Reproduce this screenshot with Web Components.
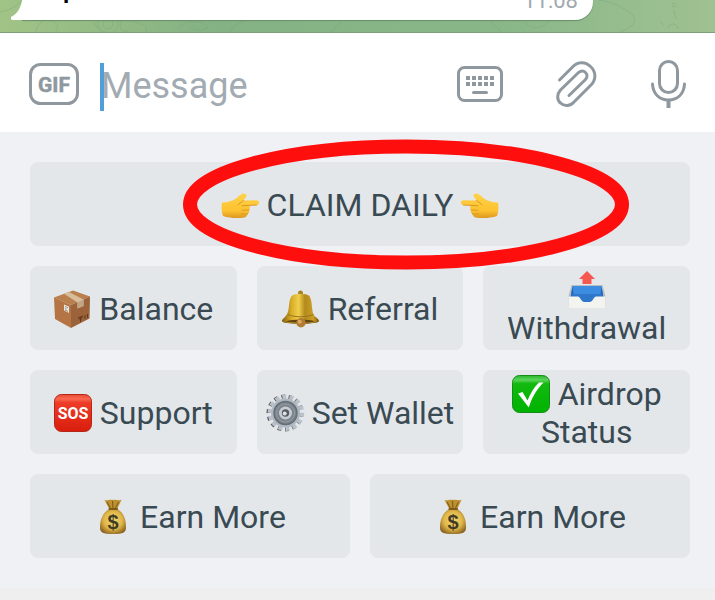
<!DOCTYPE html>
<html lang="en">
<head>
<meta charset="utf-8">
<meta name="viewport" content="width=device-width, initial-scale=1">
<title>Chat</title>
<style>
  body {
    margin: 0;
    background: #efefef;
    font-family: Roboto, "Noto Sans", sans-serif;
  }
</style>
</head>
<body>
<chat-screen></chat-screen>

<script>
// chat-emoji.js

const HAND = `
  <defs>
    <linearGradient id="skin" x1="0" y1="0" x2="0" y2="1">
      <stop offset="0" stop-color="#ffd24a"/>
      <stop offset=".7" stop-color="#fdc22f"/>
      <stop offset="1" stop-color="#dd9720"/>
    </linearGradient>
  </defs>
  <path fill="url(#skin)" d="M1 16.500 C4 17 9 15.500 12.500 14 C15.500 12.500 18 9.500 21 8 C24 6.500 26.500 9 25 11 L22.500 14.500 L35.500 14.300 C39 14.300 39 19 35.500 19 L28 19.500 C29.500 21 29 23 28 24 C28.500 26 27.800 27.500 26.500 28 C26 30.500 24.500 31.500 22 31.800 C16 32.500 7 32 2 30 C.5 27 .3 20 1 16.500Z"/>
  <path fill="none" stroke="#d99a22" stroke-width="1" stroke-linecap="round" d="M22.500 14.600 C20 17 18 17 17 19 M35.500 19 L21 19.800 M28 24 L21 24.200 M26.500 28 L20.500 28"/>`;

const EMOJI = {
  'hand-right': HAND,
  'hand-left': `<g transform="translate(38 0) scale(-1 1)">${HAND}</g>`,
  box: `
    <path fill="#b97f4c" d="M1 7.500 L20 .5 L37 6.500 L18 15Z"/>
    <path fill="#b57443" d="M1 7.500 L18 15 V38 L2 29Z"/>
    <path fill="#9c6239" d="M18 15 L37 6.500 L36.500 28.500 L18 38Z"/>
    <path fill="#d8bd9d" d="M11 3.800 L16 2 L30.500 9.500 V16 L24.500 18.500 V12.500Z"/>
    <path fill="#c2a586" d="M24.500 12.500 L30.500 9.500 V16 L24.500 18.500Z"/>
    <path fill="#e8e5df" d="M11 14.500 L16 16.500 V23 L11 20.500Z"/>
    <path fill="none" stroke="#85817a" stroke-width=".8" d="M12 16.500 L15 17.700 M12 18.500 L13.500 19.200 M12 20 L15 21.300"/>
    <path fill="none" stroke="#643a1e" stroke-width="1" d="M25 28 L30 26 M27.500 27 V32 M25.500 28 L27.500 30 L29.500 26 M32 25 V29 M34.500 24 V28"/>`,
  bell: `
    <defs>
      <linearGradient id="brass" x1="0" x2="1">
        <stop offset="0" stop-color="#80600f"/>
        <stop offset=".25" stop-color="#d8ab25"/>
        <stop offset=".45" stop-color="#f0cf4c"/>
        <stop offset=".62" stop-color="#b38a1c"/>
        <stop offset=".85" stop-color="#caa025"/>
        <stop offset="1" stop-color="#795610"/>
      </linearGradient>
    </defs>
    <circle cx="18.500" cy="3" r="2.500" fill="#a5801e"/>
    <ellipse cx="18.500" cy="31" rx="18.500" ry="3" fill="#765414"/>
    <path fill="url(#brass)" d="M9.500 6 C13 3 24 3 27.500 6 C31 12 29 22 32.500 26 C34.500 28 37 29 37 31 C31 34.500 6 34.500 0 31 C0 29 2.500 28 4.500 25 C8 20 6 11.500 9.500 6Z"/>
    <path fill="none" stroke="#9b741a" stroke-width="1" d="M6 24.500 C12 27.500 25 27.500 31.500 24.500"/>
    <path fill="#634410" d="M4 31.200 C11 29.300 26 29.300 33 31.200 C28 33.200 9 33.200 4 31.200Z"/>
    <circle cx="19" cy="32.800" r="4.700" fill="#b17c32"/>
    <circle cx="17.700" cy="31.800" r="2" fill="#daab60"/>`,
  outbox: `
    <path fill="#f65850" d="M19 0 L27 8 H23.500 V13 H14.500 V8 H11Z"/>
    <path fill="#b7bfc5" d="M3.500 14 H34.500 L37.500 25 V36 H.5 V25Z"/>
    <path fill="#3c8ce1" d="M4.500 15 H33.500 L35.500 27 L20 33 L2.500 27Z"/>
    <path fill="#2166b7" d="M4.500 15 L5.500 23 L2.500 27Z M33.500 15 L32.500 23 L35.500 27Z"/>
    <path fill="#2e77cb" d="M5.500 23 H32.500 L35.500 27 L20 33 L2.500 27Z"/>
    <path fill="#f3f3ef" d="M.5 25.500 H10 C12 25.500 13 30.500 16 31 H22 C25 30.500 26 25.500 28 25.500 H37.500 V36 Q37.500 37 36.500 37 H1.500 Q.5 37 .5 36Z"/>`,
  sos: `
    <defs>
      <linearGradient id="red" x1="0" y1="0" x2="0" y2="1">
        <stop offset="0" stop-color="#e84b34"/>
        <stop offset=".12" stop-color="#fa6950"/>
        <stop offset=".22" stop-color="#ed3c27"/>
        <stop offset="1" stop-color="#d91d0c"/>
      </linearGradient>
    </defs>
    <rect x=".5" y=".5" width="37" height="37" rx="7" fill="url(#red)" stroke="#b52616"/>
    <text x="19" y="25" text-anchor="middle" fill="#fff" font-family="Roboto, sans-serif" font-weight="700" font-size="16">SOS</text>`,
  gear: `
    <circle cx="19" cy="19" r="16.500" fill="none" stroke="#685f5c" stroke-width="4" pathLength="28" stroke-dasharray="1 1"/>
    <circle cx="20" cy="18.800" r="16" fill="none" stroke="#b9c2cc" stroke-width="4.500" pathLength="28" stroke-dasharray="1.100 .9"/>
    <circle cx="19.500" cy="19" r="14.500" fill="#b0b8c1"/>
    <circle cx="19.500" cy="19" r="11.500" fill="#7b848d" stroke="#666e76" stroke-width="1.500"/>
    <circle cx="19.500" cy="19" r="9" fill="none" stroke="#949ca4" stroke-width="1"/>
    <circle cx="19.500" cy="19" r="6.500" fill="#c8cdd4"/>
    <circle cx="19.500" cy="19" r="3.700" fill="#555b64"/>
    <circle cx="18.700" cy="19.500" r="2" fill="#dde0e4"/>`,
  check: `
    <defs>
      <linearGradient id="green" x1="0" y1="0" x2="0" y2="1">
        <stop offset="0" stop-color="#28b62c"/>
        <stop offset=".12" stop-color="#5bd45a"/>
        <stop offset=".22" stop-color="#13b90f"/>
        <stop offset="1" stop-color="#00b300"/>
      </linearGradient>
    </defs>
    <rect x=".5" y=".5" width="37" height="37" rx="7" fill="url(#green)" stroke="#158c18"/>
    <path fill="#fff" d="M6 18.500 L10.500 17 L15.500 25.500 C18.500 18 22 12 27 7.500 H31.500 C25 14 20 22 16.800 32.500Z"/>`,
  bag: `
    <defs>
      <radialGradient id="sack" cx=".5" cy=".45" r=".6">
        <stop offset="0" stop-color="#f6da70"/>
        <stop offset=".6" stop-color="#dfb548"/>
        <stop offset="1" stop-color="#8a6420"/>
      </radialGradient>
    </defs>
    <path fill="#bd912f" d="M10.500 2 C14 3 16 .800 19 2 C22 .800 24 3 27.500 1.800 L23 11.500 H15.500Z"/>
    <path fill="none" stroke="#7b5817" stroke-width="1" d="M13 4 L17 11 M18.500 3 L19 11 M24.500 4 L21 11"/>
    <path fill="url(#sack)" d="M15 11 H23.500 C30 15 32 22 32 29 C32 35 29 36 19 36 C9 36 6 35 6 29 C6 22 8.500 15 15 11Z"/>
    <path stroke="#805a19" stroke-width="2" stroke-linecap="round" d="M15.500 11 H23"/>
    <text x="19" y="31" text-anchor="middle" fill="#413b24" font-family="Liberation Sans, sans-serif" font-weight="700" font-size="20">$</text>`
};

class ChatEmoji extends HTMLElement {
  constructor() {
    super();
    this.attachShadow({ mode: 'open' });
  }

  connectedCallback() {
    this.shadowRoot.innerHTML = `
      <style>
        :host {
          display: inline-block;
          width: 38px;
          height: 38px;
          margin: -2px 0;
          vertical-align: -6px;
        }
        svg {
          display: block;
          overflow: visible;
        }
      </style>
      <svg width="38" height="38" viewBox="0 0 38 38" aria-hidden="true">${EMOJI[this.getAttribute('name')]}</svg>
    `;
  }
}

customElements.define('chat-emoji', ChatEmoji);

// chat-history.js

class ChatHistory extends HTMLElement {
  constructor() {
    super();
    this.attachShadow({ mode: 'open' });
    this.shadowRoot.innerHTML = `
      <style>
        :host {
          display: flex;
          align-items: flex-end;
          position: relative;
          box-sizing: border-box;
          height: 33px;
          padding: 0 122px 12px 11px;
          overflow: hidden;
          background: linear-gradient(90deg, #a1c386 0%, #84b284 30%, #89b788 70%, #a0c192 100%);
          border-bottom: 1px solid #7da17b;
        }
        .pattern {
          position: absolute;
          inset: 0;
          width: 100%;
          height: 100%;
          fill: none;
          stroke: #76a277;
          opacity: .35;
        }
        .tail {
          position: relative;
          z-index: 1;
          flex: none;
          margin-right: -1px;
          fill: #fff;
        }
        .bubble {
          position: relative;
          flex: 1;
          display: flex;
          justify-content: space-between;
          align-items: flex-end;
          box-sizing: border-box;
          height: 64px;
          padding: 0 15px 6px 40px;
          background: #fff;
          border-radius: 0 18px 18px 0;
          box-shadow: 0 1px 1px #668f68;
        }
        p {
          margin: 0 0 10px;
          font-size: 36px;
          line-height: 42px;
          color: #000;
        }
        time {
          font-size: 22px;
          line-height: 26px;
          color: #a1a9af;
        }
      </style>
      <svg class="pattern" aria-hidden="true">
        <path d="M0 12 Q14 10 22 0 M36 32 Q38 20 48 20 Q62 22 56 32 M94 22 Q98 32 106 32 M122 21 Q116 30 128 32 M130 21 Q150 24 146 32 M178 29 Q184 20 194 22 Q206 22 208 28 Q200 32 190 28 M230 32 Q234 22 246 21 M330 32 L342 22 M490 21 L502 32 M524 22 Q536 34 550 21 M598 0 Q618 2 634 16 Q638 26 620 32 M660 22 l4 3 M674 10 l2 9 M668 29 a5 5 0 0 1 10 0"/>
        <circle cx="108" cy="24" r="5"/>
        <circle cx="108" cy="24" r="10"/>
        <circle cx="674" cy="5" r="2"/>
      </svg>
      <svg class="tail" width="12" height="20" viewBox="0 0 12 20" aria-hidden="true">
        <path d="M11 0 C10 8 6 14 0 17 Q-1 20 2 20 H12 V0Z"/>
      </svg>
      <div class="bubble">
        <p>p</p>
        <time>11:08</time>
      </div>
    `;
  }
}

customElements.define('chat-history', ChatHistory);

// message-bar.js

class MessageBar extends HTMLElement {
  constructor() {
    super();
    this.attachShadow({ mode: 'open' });
    this.shadowRoot.innerHTML = `
      <style>
        :host {
          display: flex;
          align-items: center;
          gap: 42px;
          box-sizing: border-box;
          height: 99px;
          padding: 3px 20px 0 28px;
          background: #fff;
        }
        button {
          flex: none;
          padding: 0;
          border: 0;
          background: none;
          color: #8f989e;
        }
        svg {
          display: block;
          fill: none;
          stroke: currentColor;
          stroke-width: 3;
          stroke-linecap: round;
        }
        .field {
          position: relative;
          flex: 1;
          min-width: 0;
          margin-left: -22px;
          padding-top: 6px;
        }
        .caret {
          position: absolute;
          left: 0;
          bottom: 0;
          width: 4px;
          height: 48px;
          background: #519fd8;
        }
        input {
          display: block;
          box-sizing: border-box;
          width: 100%;
          height: 48px;
          padding: 0 0 2px 1px;
          border: 0;
          outline: 0;
          background: none;
          font: 36px/46px Roboto, "Noto Sans", sans-serif;
          caret-color: transparent;
        }
        input::placeholder {
          color: #a3abb2;
          opacity: 1;
        }
      </style>
      <button type="button" aria-label="GIF">
        <svg width="52" height="52" viewBox="0 0 52 52">
          <rect x="2.500" y="6.500" width="47" height="39" rx="10"/>
          <text x="26" y="34" text-anchor="middle" fill="currentColor" stroke="currentColor" stroke-width=".5" font-family="Roboto, sans-serif" font-weight="700" font-size="21">GIF</text>
        </svg>
      </button>
      <div class="field">
        <input type="text" placeholder="Message" aria-label="Message">
        <span class="caret"></span>
      </div>
      <button type="button" aria-label="Keyboard">
        <svg width="52" height="52" viewBox="0 0 52 52">
          <rect x="3.500" y="9.500" width="43" height="33" rx="6"/>
          <path stroke-width="4" stroke-linecap="butt" stroke-dasharray="4 2" d="M11 20 H39 M11 26 H39"/>
          <path d="M18.500 34.500 H31.500"/>
        </svg>
      </button>
      <button type="button" aria-label="Attach">
        <svg width="52" height="52" viewBox="0 0 52 52">
          <path d="M10.500 22 L23 9.500 C28 3.500 36 3 41.500 8.500 C47.500 14 47 22 42 27 L25 44 C21 48.500 15 48.500 11.500 45 C7.500 41.500 8 36 11.500 32 L29 15 C31.500 12.500 34.500 12.500 36.500 14.500 C38.500 16.500 38.500 19.500 36 22 L20 37.500"/>
        </svg>
      </button>
      <button type="button" aria-label="Voice message">
        <svg width="52" height="52" viewBox="0 0 52 52">
          <rect x="16.500" y="3.500" width="18" height="31" rx="9"/>
          <path d="M9.500 26 C10 36 16.500 42 25.500 42 C34.500 42 41 36 41.500 26"/>
          <path stroke-width="4" stroke-linecap="butt" d="M25.500 42 V50"/>
        </svg>
      </button>
    `;
  }
}

customElements.define('message-bar', MessageBar);

// bot-key.js

class BotKey extends HTMLElement {
  constructor() {
    super();
    this.attachShadow({ mode: 'open' });
    this.shadowRoot.innerHTML = `
      <style>
        :host {
          display: block;
          flex: 1 1 0;
          min-width: 0;
        }
        button {
          display: block;
          width: 100%;
          height: 84px;
          padding: 2px 4px 0;
          border: 0;
          border-radius: 8px;
          background: #e3e7ea;
          color: #3a4a53;
          font: 32px/38px Roboto, "Noto Sans", sans-serif;
          text-align: center;
        }
      </style>
      <button type="button"><slot></slot></button>
    `;
  }
}

customElements.define('bot-key', BotKey);

// key-row.js

class KeyRow extends HTMLElement {
  constructor() {
    super();
    this.attachShadow({ mode: 'open' });
    this.shadowRoot.innerHTML = `
      <style>
        :host {
          display: flex;
          gap: 20px;
          position: relative;
        }
      </style>
      <slot></slot>
    `;
  }
}

customElements.define('key-row', KeyRow);

// red-ring.js, drawn over the row that holds it

class RedRing extends HTMLElement {
  constructor() {
    super();
    this.attachShadow({ mode: 'open' });
    this.shadowRoot.innerHTML = `
      <style>
        :host {
          display: block;
          position: absolute;
          z-index: 1;
          top: -22px;
          left: calc(50% - 177px);
          pointer-events: none;
        }
        svg {
          display: block;
          overflow: visible;
        }
      </style>
      <svg width="446" height="130" viewBox="0 0 446 130" aria-hidden="true">
        <ellipse cx="223" cy="64.500" rx="216" ry="58" fill="none" stroke="#ff0e0e" stroke-width="14"/>
      </svg>
    `;
  }
}

customElements.define('red-ring', RedRing);

// chat-screen.js

class ChatScreen extends HTMLElement {
  constructor() {
    super();
    this.attachShadow({ mode: 'open' });
    this.shadowRoot.innerHTML = `
      <style>
        :host {
          display: block;
        }
        .keyboard {
          display: flex;
          flex-direction: column;
          gap: 20px;
          padding: 30px 25px 30px 30px;
          background: #f0f1f5;
        }
      </style>
      <chat-history></chat-history>
      <message-bar></message-bar>
      <div class="keyboard">
        <key-row>
          <bot-key><chat-emoji name="hand-right"></chat-emoji> CLAIM DAILY <chat-emoji name="hand-left"></chat-emoji></bot-key>
          <red-ring></red-ring>
        </key-row>
        <key-row>
          <bot-key><chat-emoji name="box"></chat-emoji> Balance</bot-key>
          <bot-key><chat-emoji name="bell"></chat-emoji> Referral</bot-key>
          <bot-key><chat-emoji name="outbox"></chat-emoji> Withdrawal</bot-key>
        </key-row>
        <key-row>
          <bot-key><chat-emoji name="sos"></chat-emoji> Support</bot-key>
          <bot-key><chat-emoji name="gear"></chat-emoji> Set Wallet</bot-key>
          <bot-key><chat-emoji name="check"></chat-emoji> Airdrop Status</bot-key>
        </key-row>
        <key-row>
          <bot-key><chat-emoji name="bag"></chat-emoji> Earn More</bot-key>
          <bot-key><chat-emoji name="bag"></chat-emoji> Earn More</bot-key>
        </key-row>
      </div>
    `;
  }
}

customElements.define('chat-screen', ChatScreen);
</script>
</body>
</html>
